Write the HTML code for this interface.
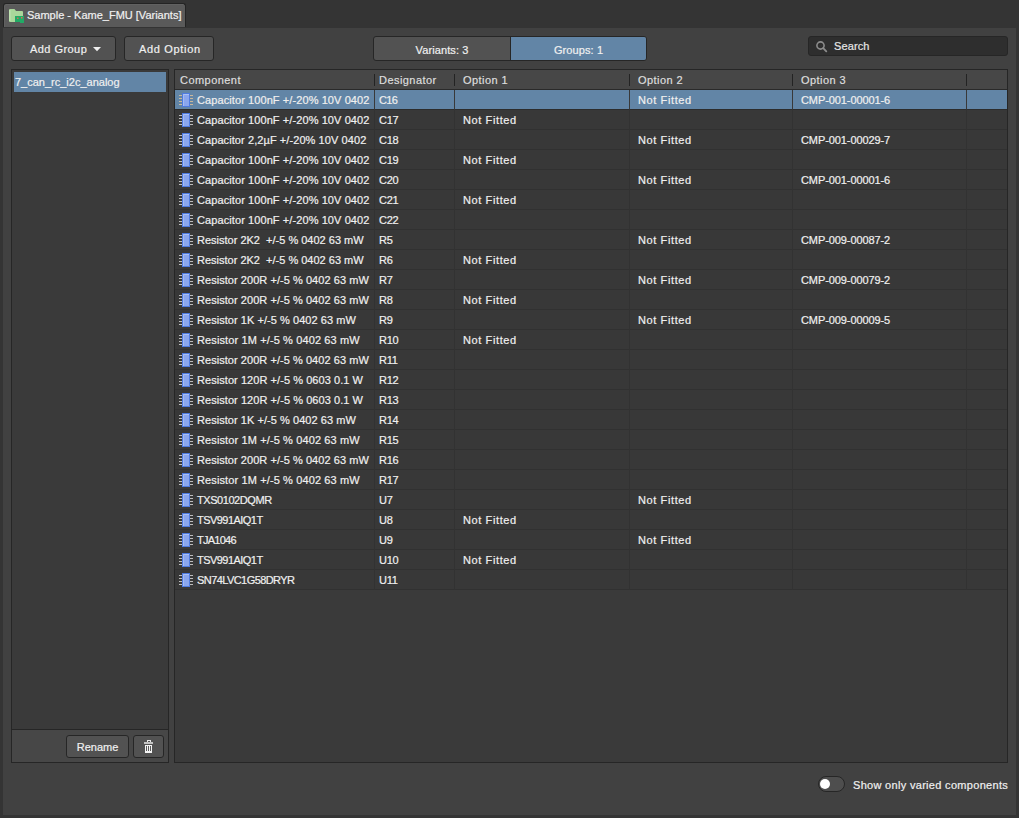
<!DOCTYPE html>
<html><head><meta charset="utf-8">
<style>
*{margin:0;padding:0;box-sizing:border-box}
html,body{width:1019px;height:818px;overflow:hidden;background:#343434;font-family:"Liberation Sans",sans-serif;font-size:11px;color:#eeeeee;-webkit-text-stroke:0.2px currentColor}
div,svg{position:absolute}
.panel{left:3px;top:28px;width:1013px;height:787px;background:#414141}
.tab{left:3px;top:3px;width:183px;height:24px;background:#5a5a5a;border-radius:3px 3px 0 0;border:1px solid #242424;border-bottom:none;box-shadow:inset 1px 1px 0 #616161}
.tabtxt{left:27px;top:6px;line-height:18px;color:#f0f0f0}
.btn{background:#525252;border:1px solid #262626;border-radius:3px;color:#f0f0f0;text-align:center}
.seg{left:373px;top:36px;width:274px;height:25px;border:1px solid #262626;border-radius:3px;background:#525252;overflow:hidden}
.search{left:808px;top:36px;width:200px;height:20px;background:#2e2e2e;border:1px solid #262626;border-radius:3px}
.list{left:11px;top:69px;width:158px;height:661px;background:#3a3a3a;border:1px solid #262626;border-bottom:none}
.foot{left:11px;top:729px;width:158px;height:34px;background:#474747;border:1px solid #262626}
.tbl{left:174px;top:69px;width:834px;height:694px;background:#3a3a3a;border:1px solid #262626}
.hdr{left:175px;top:70px;width:832px;height:19px;background:#474747}
.hline{left:175px;top:89px;width:832px;height:1px;background:#2a2a2a}
.row{left:175px;width:832px;height:20px;background:#383838;border-bottom:1px solid #313131}
.row.sel{background:#6285a6;border-bottom:1px solid #2c2c2c}
.t{line-height:19px;white-space:pre;color:#f0f0f0}
.h{line-height:19px;white-space:pre;color:#dedede;top:71px;letter-spacing:0.45px}
.vs{top:90px;width:1px;height:500px;background:#323232}
.hs{top:74px;width:1px;height:12px;background:#232323}
.ic{}
</style></head><body>
<div class="panel"></div>
<div class="tab"></div>
<svg style="left:9px;top:9px" width="16" height="15" viewBox="0 0 16 15">
 <path d="M0 1 Q0 0 1 0 H5.5 L7 2 H13 Q14 2 14 3 V12 Q14 13 13 13 H1 Q0 13 0 12 Z" fill="#a9d79b"/>
 <rect x="0" y="1" width="1.5" height="11" fill="#bfe3b2"/>
 <path d="M6 7 H15 V14 H11 V13 H6 Z" fill="#22aa66"/>
 <rect x="8" y="8.5" width="1.5" height="1.5" fill="#d9695a"/>
 <rect x="12" y="8" width="1.5" height="1.5" fill="#d9695a"/>
</svg>
<div class="tabtxt">Sample - Kame_FMU [Variants]</div>

<div class="btn" style="left:11px;top:36px;width:105px;height:25px"></div><div class="t" style="left:30px;top:38px;line-height:23px;letter-spacing:0.45px">Add Group</div>
<svg style="left:93px;top:47px" width="8" height="5" viewBox="0 0 8 5"><path d="M0 0 H8 L4 4.3 Z" fill="#f0f0f0"/></svg>
<div class="btn" style="left:124px;top:36px;width:90px;height:25px"></div><div class="t" style="left:139px;top:38px;line-height:23px;letter-spacing:0.67px">Add Option</div>

<div class="seg">
  <div style="left:0;top:2px;width:136px;height:23px;line-height:23px;text-align:center;color:#f0f0f0;letter-spacing:0.1px">Variants: 3</div>
  <div style="left:136px;top:0;width:1px;height:23px;background:#262626"></div>
  <div style="left:137px;top:0;width:135px;height:23px;background:#6285a6;color:#f0f0f0"><div style="left:0;top:2px;width:135px;line-height:23px;text-align:center;letter-spacing:0.1px">Groups: 1</div></div>
</div>

<div class="search"></div>
<svg style="left:814px;top:39px" width="14" height="14" viewBox="0 0 14 14"><circle cx="6.5" cy="6.5" r="3.6" fill="none" stroke="#8c8c8c" stroke-width="1.6"/><path d="M9.2 9.2 L12.3 12.3" stroke="#8c8c8c" stroke-width="1.8" stroke-linecap="round"/></svg>
<div class="t" style="left:834px;top:36px;line-height:20px;color:#e6e6e6;letter-spacing:0.12px">Search</div>

<div class="list"></div>
<div style="left:14px;top:72px;width:152px;height:20px;background:#6285a6"></div>
<div class="t" style="left:15px;top:72px;line-height:20px">7_can_rc_i2c_analog</div>
<div class="foot"></div>
<div class="btn" style="left:66px;top:735px;width:63px;height:23px;line-height:23px">Rename</div>
<div class="btn" style="left:133px;top:735px;width:31px;height:23px"></div>
<svg style="left:143px;top:739px" width="11" height="14" viewBox="0 0 11 14" shape-rendering="crispEdges">
 <rect x="4" y="1" width="4" height="1" fill="#e6e6e6"/><rect x="4" y="2" width="1" height="1" fill="#e6e6e6"/><rect x="7" y="2" width="1" height="1" fill="#e6e6e6"/>
 <rect x="1" y="3" width="9" height="2" fill="#c4c4c4"/>
 <rect x="2" y="6" width="7" height="8" rx="1" fill="#f4f4f4"/>
 <rect x="3" y="7" width="1" height="5" fill="#5a5a5a"/><rect x="5" y="7" width="1" height="5" fill="#5a5a5a"/><rect x="7" y="7" width="1" height="5" fill="#5a5a5a"/>
</svg>

<div class="tbl"></div>
<div class="hdr"></div>
<div class="hline"></div>
<div class="h" style="left:180px">Component</div>
<div class="h" style="left:379px">Designator</div>
<div class="h" style="left:463px">Option 1</div>
<div class="h" style="left:638px">Option 2</div>
<div class="h" style="left:801px">Option 3</div>
<div class="row sel" style="top:90px"></div><svg class="ic" style="left:179px;top:93px" width="15" height="14" viewBox="0 0 15 14"><rect x="0" y="2" width="3" height="1" fill="#c9b89c"/><rect x="11" y="2" width="3" height="1" fill="#c9b89c"/><rect x="0" y="5" width="3" height="1" fill="#c9b89c"/><rect x="11" y="5" width="3" height="1" fill="#c9b89c"/><rect x="0" y="8" width="3" height="1" fill="#c9b89c"/><rect x="11" y="8" width="3" height="1" fill="#c9b89c"/><rect x="0" y="11" width="3" height="1" fill="#c9b89c"/><rect x="11" y="11" width="3" height="1" fill="#c9b89c"/><rect x="3" y="0" width="8" height="14" fill="#4f7be0"/><rect x="4" y="1" width="6" height="12" fill="#8aa6ee"/><rect x="4" y="1" width="6" height="1" fill="#a9c0f5"/><rect x="4" y="1" width="1" height="12" fill="#a3bbf3"/></svg><div class="t" style="left:197px;top:91px;letter-spacing:0.09px;">Capacitor 100nF +/-20% 10V 0402</div><div class="t" style="left:379px;top:91px;letter-spacing:-0.6px;">C16</div><div class="t" style="left:638px;top:91px;letter-spacing:0.61px;">Not Fitted</div><div class="t" style="left:801px;top:91px;letter-spacing:-0.09px;">CMP-001-00001-6</div><div class="row" style="top:110px"></div><svg class="ic" style="left:179px;top:113px" width="15" height="14" viewBox="0 0 15 14"><rect x="0" y="2" width="3" height="1" fill="#bdbdbd"/><rect x="11" y="2" width="3" height="1" fill="#bdbdbd"/><rect x="0" y="5" width="3" height="1" fill="#bdbdbd"/><rect x="11" y="5" width="3" height="1" fill="#bdbdbd"/><rect x="0" y="8" width="3" height="1" fill="#bdbdbd"/><rect x="11" y="8" width="3" height="1" fill="#bdbdbd"/><rect x="0" y="11" width="3" height="1" fill="#bdbdbd"/><rect x="11" y="11" width="3" height="1" fill="#bdbdbd"/><rect x="3" y="0" width="8" height="14" fill="#4f7be0"/><rect x="4" y="1" width="6" height="12" fill="#8aa6ee"/><rect x="4" y="1" width="6" height="1" fill="#a9c0f5"/><rect x="4" y="1" width="1" height="12" fill="#a3bbf3"/></svg><div class="t" style="left:197px;top:111px;letter-spacing:0.09px;">Capacitor 100nF +/-20% 10V 0402</div><div class="t" style="left:379px;top:111px;letter-spacing:-0.3px;">C17</div><div class="t" style="left:463px;top:111px;letter-spacing:0.61px;">Not Fitted</div><div class="row" style="top:130px"></div><svg class="ic" style="left:179px;top:133px" width="15" height="14" viewBox="0 0 15 14"><rect x="0" y="2" width="3" height="1" fill="#bdbdbd"/><rect x="11" y="2" width="3" height="1" fill="#bdbdbd"/><rect x="0" y="5" width="3" height="1" fill="#bdbdbd"/><rect x="11" y="5" width="3" height="1" fill="#bdbdbd"/><rect x="0" y="8" width="3" height="1" fill="#bdbdbd"/><rect x="11" y="8" width="3" height="1" fill="#bdbdbd"/><rect x="0" y="11" width="3" height="1" fill="#bdbdbd"/><rect x="11" y="11" width="3" height="1" fill="#bdbdbd"/><rect x="3" y="0" width="8" height="14" fill="#4f7be0"/><rect x="4" y="1" width="6" height="12" fill="#8aa6ee"/><rect x="4" y="1" width="6" height="1" fill="#a9c0f5"/><rect x="4" y="1" width="1" height="12" fill="#a3bbf3"/></svg><div class="t" style="left:197px;top:131px;letter-spacing:0.08px;">Capacitor 2,2µF +/-20% 10V 0402</div><div class="t" style="left:379px;top:131px;letter-spacing:-0.3px;">C18</div><div class="t" style="left:638px;top:131px;letter-spacing:0.61px;">Not Fitted</div><div class="t" style="left:801px;top:131px;letter-spacing:-0.09px;">CMP-001-00029-7</div><div class="row" style="top:150px"></div><svg class="ic" style="left:179px;top:153px" width="15" height="14" viewBox="0 0 15 14"><rect x="0" y="2" width="3" height="1" fill="#bdbdbd"/><rect x="11" y="2" width="3" height="1" fill="#bdbdbd"/><rect x="0" y="5" width="3" height="1" fill="#bdbdbd"/><rect x="11" y="5" width="3" height="1" fill="#bdbdbd"/><rect x="0" y="8" width="3" height="1" fill="#bdbdbd"/><rect x="11" y="8" width="3" height="1" fill="#bdbdbd"/><rect x="0" y="11" width="3" height="1" fill="#bdbdbd"/><rect x="11" y="11" width="3" height="1" fill="#bdbdbd"/><rect x="3" y="0" width="8" height="14" fill="#4f7be0"/><rect x="4" y="1" width="6" height="12" fill="#8aa6ee"/><rect x="4" y="1" width="6" height="1" fill="#a9c0f5"/><rect x="4" y="1" width="1" height="12" fill="#a3bbf3"/></svg><div class="t" style="left:197px;top:151px;letter-spacing:0.09px;">Capacitor 100nF +/-20% 10V 0402</div><div class="t" style="left:379px;top:151px;letter-spacing:-0.3px;">C19</div><div class="t" style="left:463px;top:151px;letter-spacing:0.61px;">Not Fitted</div><div class="row" style="top:170px"></div><svg class="ic" style="left:179px;top:173px" width="15" height="14" viewBox="0 0 15 14"><rect x="0" y="2" width="3" height="1" fill="#bdbdbd"/><rect x="11" y="2" width="3" height="1" fill="#bdbdbd"/><rect x="0" y="5" width="3" height="1" fill="#bdbdbd"/><rect x="11" y="5" width="3" height="1" fill="#bdbdbd"/><rect x="0" y="8" width="3" height="1" fill="#bdbdbd"/><rect x="11" y="8" width="3" height="1" fill="#bdbdbd"/><rect x="0" y="11" width="3" height="1" fill="#bdbdbd"/><rect x="11" y="11" width="3" height="1" fill="#bdbdbd"/><rect x="3" y="0" width="8" height="14" fill="#4f7be0"/><rect x="4" y="1" width="6" height="12" fill="#8aa6ee"/><rect x="4" y="1" width="6" height="1" fill="#a9c0f5"/><rect x="4" y="1" width="1" height="12" fill="#a3bbf3"/></svg><div class="t" style="left:197px;top:171px;letter-spacing:0.09px;">Capacitor 100nF +/-20% 10V 0402</div><div class="t" style="left:379px;top:171px;letter-spacing:-0.3px;">C20</div><div class="t" style="left:638px;top:171px;letter-spacing:0.61px;">Not Fitted</div><div class="t" style="left:801px;top:171px;letter-spacing:-0.09px;">CMP-001-00001-6</div><div class="row" style="top:190px"></div><svg class="ic" style="left:179px;top:193px" width="15" height="14" viewBox="0 0 15 14"><rect x="0" y="2" width="3" height="1" fill="#bdbdbd"/><rect x="11" y="2" width="3" height="1" fill="#bdbdbd"/><rect x="0" y="5" width="3" height="1" fill="#bdbdbd"/><rect x="11" y="5" width="3" height="1" fill="#bdbdbd"/><rect x="0" y="8" width="3" height="1" fill="#bdbdbd"/><rect x="11" y="8" width="3" height="1" fill="#bdbdbd"/><rect x="0" y="11" width="3" height="1" fill="#bdbdbd"/><rect x="11" y="11" width="3" height="1" fill="#bdbdbd"/><rect x="3" y="0" width="8" height="14" fill="#4f7be0"/><rect x="4" y="1" width="6" height="12" fill="#8aa6ee"/><rect x="4" y="1" width="6" height="1" fill="#a9c0f5"/><rect x="4" y="1" width="1" height="12" fill="#a3bbf3"/></svg><div class="t" style="left:197px;top:191px;letter-spacing:0.09px;">Capacitor 100nF +/-20% 10V 0402</div><div class="t" style="left:379px;top:191px;letter-spacing:-0.3px;">C21</div><div class="t" style="left:463px;top:191px;letter-spacing:0.61px;">Not Fitted</div><div class="row" style="top:210px"></div><svg class="ic" style="left:179px;top:213px" width="15" height="14" viewBox="0 0 15 14"><rect x="0" y="2" width="3" height="1" fill="#bdbdbd"/><rect x="11" y="2" width="3" height="1" fill="#bdbdbd"/><rect x="0" y="5" width="3" height="1" fill="#bdbdbd"/><rect x="11" y="5" width="3" height="1" fill="#bdbdbd"/><rect x="0" y="8" width="3" height="1" fill="#bdbdbd"/><rect x="11" y="8" width="3" height="1" fill="#bdbdbd"/><rect x="0" y="11" width="3" height="1" fill="#bdbdbd"/><rect x="11" y="11" width="3" height="1" fill="#bdbdbd"/><rect x="3" y="0" width="8" height="14" fill="#4f7be0"/><rect x="4" y="1" width="6" height="12" fill="#8aa6ee"/><rect x="4" y="1" width="6" height="1" fill="#a9c0f5"/><rect x="4" y="1" width="1" height="12" fill="#a3bbf3"/></svg><div class="t" style="left:197px;top:211px;letter-spacing:0.09px;">Capacitor 100nF +/-20% 10V 0402</div><div class="t" style="left:379px;top:211px;letter-spacing:-0.3px;">C22</div><div class="row" style="top:230px"></div><svg class="ic" style="left:179px;top:233px" width="15" height="14" viewBox="0 0 15 14"><rect x="0" y="2" width="3" height="1" fill="#bdbdbd"/><rect x="11" y="2" width="3" height="1" fill="#bdbdbd"/><rect x="0" y="5" width="3" height="1" fill="#bdbdbd"/><rect x="11" y="5" width="3" height="1" fill="#bdbdbd"/><rect x="0" y="8" width="3" height="1" fill="#bdbdbd"/><rect x="11" y="8" width="3" height="1" fill="#bdbdbd"/><rect x="0" y="11" width="3" height="1" fill="#bdbdbd"/><rect x="11" y="11" width="3" height="1" fill="#bdbdbd"/><rect x="3" y="0" width="8" height="14" fill="#4f7be0"/><rect x="4" y="1" width="6" height="12" fill="#8aa6ee"/><rect x="4" y="1" width="6" height="1" fill="#a9c0f5"/><rect x="4" y="1" width="1" height="12" fill="#a3bbf3"/></svg><div class="t" style="left:197px;top:231px;letter-spacing:0.0px;">Resistor 2K2 &nbsp;+/-5 % 0402 63 mW</div><div class="t" style="left:379px;top:231px;letter-spacing:-0.3px;">R5</div><div class="t" style="left:638px;top:231px;letter-spacing:0.61px;">Not Fitted</div><div class="t" style="left:801px;top:231px;letter-spacing:-0.09px;">CMP-009-00087-2</div><div class="row" style="top:250px"></div><svg class="ic" style="left:179px;top:253px" width="15" height="14" viewBox="0 0 15 14"><rect x="0" y="2" width="3" height="1" fill="#bdbdbd"/><rect x="11" y="2" width="3" height="1" fill="#bdbdbd"/><rect x="0" y="5" width="3" height="1" fill="#bdbdbd"/><rect x="11" y="5" width="3" height="1" fill="#bdbdbd"/><rect x="0" y="8" width="3" height="1" fill="#bdbdbd"/><rect x="11" y="8" width="3" height="1" fill="#bdbdbd"/><rect x="0" y="11" width="3" height="1" fill="#bdbdbd"/><rect x="11" y="11" width="3" height="1" fill="#bdbdbd"/><rect x="3" y="0" width="8" height="14" fill="#4f7be0"/><rect x="4" y="1" width="6" height="12" fill="#8aa6ee"/><rect x="4" y="1" width="6" height="1" fill="#a9c0f5"/><rect x="4" y="1" width="1" height="12" fill="#a3bbf3"/></svg><div class="t" style="left:197px;top:251px;letter-spacing:0.0px;">Resistor 2K2 &nbsp;+/-5 % 0402 63 mW</div><div class="t" style="left:379px;top:251px;letter-spacing:-0.3px;">R6</div><div class="t" style="left:463px;top:251px;letter-spacing:0.61px;">Not Fitted</div><div class="row" style="top:270px"></div><svg class="ic" style="left:179px;top:273px" width="15" height="14" viewBox="0 0 15 14"><rect x="0" y="2" width="3" height="1" fill="#bdbdbd"/><rect x="11" y="2" width="3" height="1" fill="#bdbdbd"/><rect x="0" y="5" width="3" height="1" fill="#bdbdbd"/><rect x="11" y="5" width="3" height="1" fill="#bdbdbd"/><rect x="0" y="8" width="3" height="1" fill="#bdbdbd"/><rect x="11" y="8" width="3" height="1" fill="#bdbdbd"/><rect x="0" y="11" width="3" height="1" fill="#bdbdbd"/><rect x="11" y="11" width="3" height="1" fill="#bdbdbd"/><rect x="3" y="0" width="8" height="14" fill="#4f7be0"/><rect x="4" y="1" width="6" height="12" fill="#8aa6ee"/><rect x="4" y="1" width="6" height="1" fill="#a9c0f5"/><rect x="4" y="1" width="1" height="12" fill="#a3bbf3"/></svg><div class="t" style="left:197px;top:271px;letter-spacing:0.05px;">Resistor 200R +/-5 % 0402 63 mW</div><div class="t" style="left:379px;top:271px;letter-spacing:-0.3px;">R7</div><div class="t" style="left:638px;top:271px;letter-spacing:0.61px;">Not Fitted</div><div class="t" style="left:801px;top:271px;letter-spacing:-0.09px;">CMP-009-00079-2</div><div class="row" style="top:290px"></div><svg class="ic" style="left:179px;top:293px" width="15" height="14" viewBox="0 0 15 14"><rect x="0" y="2" width="3" height="1" fill="#bdbdbd"/><rect x="11" y="2" width="3" height="1" fill="#bdbdbd"/><rect x="0" y="5" width="3" height="1" fill="#bdbdbd"/><rect x="11" y="5" width="3" height="1" fill="#bdbdbd"/><rect x="0" y="8" width="3" height="1" fill="#bdbdbd"/><rect x="11" y="8" width="3" height="1" fill="#bdbdbd"/><rect x="0" y="11" width="3" height="1" fill="#bdbdbd"/><rect x="11" y="11" width="3" height="1" fill="#bdbdbd"/><rect x="3" y="0" width="8" height="14" fill="#4f7be0"/><rect x="4" y="1" width="6" height="12" fill="#8aa6ee"/><rect x="4" y="1" width="6" height="1" fill="#a9c0f5"/><rect x="4" y="1" width="1" height="12" fill="#a3bbf3"/></svg><div class="t" style="left:197px;top:291px;letter-spacing:0.05px;">Resistor 200R +/-5 % 0402 63 mW</div><div class="t" style="left:379px;top:291px;letter-spacing:-0.3px;">R8</div><div class="t" style="left:463px;top:291px;letter-spacing:0.61px;">Not Fitted</div><div class="row" style="top:310px"></div><svg class="ic" style="left:179px;top:313px" width="15" height="14" viewBox="0 0 15 14"><rect x="0" y="2" width="3" height="1" fill="#bdbdbd"/><rect x="11" y="2" width="3" height="1" fill="#bdbdbd"/><rect x="0" y="5" width="3" height="1" fill="#bdbdbd"/><rect x="11" y="5" width="3" height="1" fill="#bdbdbd"/><rect x="0" y="8" width="3" height="1" fill="#bdbdbd"/><rect x="11" y="8" width="3" height="1" fill="#bdbdbd"/><rect x="0" y="11" width="3" height="1" fill="#bdbdbd"/><rect x="11" y="11" width="3" height="1" fill="#bdbdbd"/><rect x="3" y="0" width="8" height="14" fill="#4f7be0"/><rect x="4" y="1" width="6" height="12" fill="#8aa6ee"/><rect x="4" y="1" width="6" height="1" fill="#a9c0f5"/><rect x="4" y="1" width="1" height="12" fill="#a3bbf3"/></svg><div class="t" style="left:197px;top:311px;letter-spacing:0.05px;">Resistor 1K +/-5 % 0402 63 mW</div><div class="t" style="left:379px;top:311px;letter-spacing:-0.3px;">R9</div><div class="t" style="left:638px;top:311px;letter-spacing:0.61px;">Not Fitted</div><div class="t" style="left:801px;top:311px;letter-spacing:-0.09px;">CMP-009-00009-5</div><div class="row" style="top:330px"></div><svg class="ic" style="left:179px;top:333px" width="15" height="14" viewBox="0 0 15 14"><rect x="0" y="2" width="3" height="1" fill="#bdbdbd"/><rect x="11" y="2" width="3" height="1" fill="#bdbdbd"/><rect x="0" y="5" width="3" height="1" fill="#bdbdbd"/><rect x="11" y="5" width="3" height="1" fill="#bdbdbd"/><rect x="0" y="8" width="3" height="1" fill="#bdbdbd"/><rect x="11" y="8" width="3" height="1" fill="#bdbdbd"/><rect x="0" y="11" width="3" height="1" fill="#bdbdbd"/><rect x="11" y="11" width="3" height="1" fill="#bdbdbd"/><rect x="3" y="0" width="8" height="14" fill="#4f7be0"/><rect x="4" y="1" width="6" height="12" fill="#8aa6ee"/><rect x="4" y="1" width="6" height="1" fill="#a9c0f5"/><rect x="4" y="1" width="1" height="12" fill="#a3bbf3"/></svg><div class="t" style="left:197px;top:331px;letter-spacing:0.12px;">Resistor 1M +/-5 % 0402 63 mW</div><div class="t" style="left:379px;top:331px;letter-spacing:-0.3px;">R10</div><div class="t" style="left:463px;top:331px;letter-spacing:0.61px;">Not Fitted</div><div class="row" style="top:350px"></div><svg class="ic" style="left:179px;top:353px" width="15" height="14" viewBox="0 0 15 14"><rect x="0" y="2" width="3" height="1" fill="#bdbdbd"/><rect x="11" y="2" width="3" height="1" fill="#bdbdbd"/><rect x="0" y="5" width="3" height="1" fill="#bdbdbd"/><rect x="11" y="5" width="3" height="1" fill="#bdbdbd"/><rect x="0" y="8" width="3" height="1" fill="#bdbdbd"/><rect x="11" y="8" width="3" height="1" fill="#bdbdbd"/><rect x="0" y="11" width="3" height="1" fill="#bdbdbd"/><rect x="11" y="11" width="3" height="1" fill="#bdbdbd"/><rect x="3" y="0" width="8" height="14" fill="#4f7be0"/><rect x="4" y="1" width="6" height="12" fill="#8aa6ee"/><rect x="4" y="1" width="6" height="1" fill="#a9c0f5"/><rect x="4" y="1" width="1" height="12" fill="#a3bbf3"/></svg><div class="t" style="left:197px;top:351px;letter-spacing:0.05px;">Resistor 200R +/-5 % 0402 63 mW</div><div class="t" style="left:379px;top:351px;letter-spacing:-0.3px;">R11</div><div class="row" style="top:370px"></div><svg class="ic" style="left:179px;top:373px" width="15" height="14" viewBox="0 0 15 14"><rect x="0" y="2" width="3" height="1" fill="#bdbdbd"/><rect x="11" y="2" width="3" height="1" fill="#bdbdbd"/><rect x="0" y="5" width="3" height="1" fill="#bdbdbd"/><rect x="11" y="5" width="3" height="1" fill="#bdbdbd"/><rect x="0" y="8" width="3" height="1" fill="#bdbdbd"/><rect x="11" y="8" width="3" height="1" fill="#bdbdbd"/><rect x="0" y="11" width="3" height="1" fill="#bdbdbd"/><rect x="11" y="11" width="3" height="1" fill="#bdbdbd"/><rect x="3" y="0" width="8" height="14" fill="#4f7be0"/><rect x="4" y="1" width="6" height="12" fill="#8aa6ee"/><rect x="4" y="1" width="6" height="1" fill="#a9c0f5"/><rect x="4" y="1" width="1" height="12" fill="#a3bbf3"/></svg><div class="t" style="left:197px;top:371px;letter-spacing:0.06px;">Resistor 120R +/-5 % 0603 0.1 W</div><div class="t" style="left:379px;top:371px;letter-spacing:-0.3px;">R12</div><div class="row" style="top:390px"></div><svg class="ic" style="left:179px;top:393px" width="15" height="14" viewBox="0 0 15 14"><rect x="0" y="2" width="3" height="1" fill="#bdbdbd"/><rect x="11" y="2" width="3" height="1" fill="#bdbdbd"/><rect x="0" y="5" width="3" height="1" fill="#bdbdbd"/><rect x="11" y="5" width="3" height="1" fill="#bdbdbd"/><rect x="0" y="8" width="3" height="1" fill="#bdbdbd"/><rect x="11" y="8" width="3" height="1" fill="#bdbdbd"/><rect x="0" y="11" width="3" height="1" fill="#bdbdbd"/><rect x="11" y="11" width="3" height="1" fill="#bdbdbd"/><rect x="3" y="0" width="8" height="14" fill="#4f7be0"/><rect x="4" y="1" width="6" height="12" fill="#8aa6ee"/><rect x="4" y="1" width="6" height="1" fill="#a9c0f5"/><rect x="4" y="1" width="1" height="12" fill="#a3bbf3"/></svg><div class="t" style="left:197px;top:391px;letter-spacing:0.06px;">Resistor 120R +/-5 % 0603 0.1 W</div><div class="t" style="left:379px;top:391px;letter-spacing:-0.3px;">R13</div><div class="row" style="top:410px"></div><svg class="ic" style="left:179px;top:413px" width="15" height="14" viewBox="0 0 15 14"><rect x="0" y="2" width="3" height="1" fill="#bdbdbd"/><rect x="11" y="2" width="3" height="1" fill="#bdbdbd"/><rect x="0" y="5" width="3" height="1" fill="#bdbdbd"/><rect x="11" y="5" width="3" height="1" fill="#bdbdbd"/><rect x="0" y="8" width="3" height="1" fill="#bdbdbd"/><rect x="11" y="8" width="3" height="1" fill="#bdbdbd"/><rect x="0" y="11" width="3" height="1" fill="#bdbdbd"/><rect x="11" y="11" width="3" height="1" fill="#bdbdbd"/><rect x="3" y="0" width="8" height="14" fill="#4f7be0"/><rect x="4" y="1" width="6" height="12" fill="#8aa6ee"/><rect x="4" y="1" width="6" height="1" fill="#a9c0f5"/><rect x="4" y="1" width="1" height="12" fill="#a3bbf3"/></svg><div class="t" style="left:197px;top:411px;letter-spacing:0.05px;">Resistor 1K +/-5 % 0402 63 mW</div><div class="t" style="left:379px;top:411px;letter-spacing:-0.3px;">R14</div><div class="row" style="top:430px"></div><svg class="ic" style="left:179px;top:433px" width="15" height="14" viewBox="0 0 15 14"><rect x="0" y="2" width="3" height="1" fill="#bdbdbd"/><rect x="11" y="2" width="3" height="1" fill="#bdbdbd"/><rect x="0" y="5" width="3" height="1" fill="#bdbdbd"/><rect x="11" y="5" width="3" height="1" fill="#bdbdbd"/><rect x="0" y="8" width="3" height="1" fill="#bdbdbd"/><rect x="11" y="8" width="3" height="1" fill="#bdbdbd"/><rect x="0" y="11" width="3" height="1" fill="#bdbdbd"/><rect x="11" y="11" width="3" height="1" fill="#bdbdbd"/><rect x="3" y="0" width="8" height="14" fill="#4f7be0"/><rect x="4" y="1" width="6" height="12" fill="#8aa6ee"/><rect x="4" y="1" width="6" height="1" fill="#a9c0f5"/><rect x="4" y="1" width="1" height="12" fill="#a3bbf3"/></svg><div class="t" style="left:197px;top:431px;letter-spacing:0.12px;">Resistor 1M +/-5 % 0402 63 mW</div><div class="t" style="left:379px;top:431px;letter-spacing:-0.3px;">R15</div><div class="row" style="top:450px"></div><svg class="ic" style="left:179px;top:453px" width="15" height="14" viewBox="0 0 15 14"><rect x="0" y="2" width="3" height="1" fill="#bdbdbd"/><rect x="11" y="2" width="3" height="1" fill="#bdbdbd"/><rect x="0" y="5" width="3" height="1" fill="#bdbdbd"/><rect x="11" y="5" width="3" height="1" fill="#bdbdbd"/><rect x="0" y="8" width="3" height="1" fill="#bdbdbd"/><rect x="11" y="8" width="3" height="1" fill="#bdbdbd"/><rect x="0" y="11" width="3" height="1" fill="#bdbdbd"/><rect x="11" y="11" width="3" height="1" fill="#bdbdbd"/><rect x="3" y="0" width="8" height="14" fill="#4f7be0"/><rect x="4" y="1" width="6" height="12" fill="#8aa6ee"/><rect x="4" y="1" width="6" height="1" fill="#a9c0f5"/><rect x="4" y="1" width="1" height="12" fill="#a3bbf3"/></svg><div class="t" style="left:197px;top:451px;letter-spacing:0.05px;">Resistor 200R +/-5 % 0402 63 mW</div><div class="t" style="left:379px;top:451px;letter-spacing:-0.3px;">R16</div><div class="row" style="top:470px"></div><svg class="ic" style="left:179px;top:473px" width="15" height="14" viewBox="0 0 15 14"><rect x="0" y="2" width="3" height="1" fill="#bdbdbd"/><rect x="11" y="2" width="3" height="1" fill="#bdbdbd"/><rect x="0" y="5" width="3" height="1" fill="#bdbdbd"/><rect x="11" y="5" width="3" height="1" fill="#bdbdbd"/><rect x="0" y="8" width="3" height="1" fill="#bdbdbd"/><rect x="11" y="8" width="3" height="1" fill="#bdbdbd"/><rect x="0" y="11" width="3" height="1" fill="#bdbdbd"/><rect x="11" y="11" width="3" height="1" fill="#bdbdbd"/><rect x="3" y="0" width="8" height="14" fill="#4f7be0"/><rect x="4" y="1" width="6" height="12" fill="#8aa6ee"/><rect x="4" y="1" width="6" height="1" fill="#a9c0f5"/><rect x="4" y="1" width="1" height="12" fill="#a3bbf3"/></svg><div class="t" style="left:197px;top:471px;letter-spacing:0.12px;">Resistor 1M +/-5 % 0402 63 mW</div><div class="t" style="left:379px;top:471px;letter-spacing:-0.3px;">R17</div><div class="row" style="top:490px"></div><svg class="ic" style="left:179px;top:493px" width="15" height="14" viewBox="0 0 15 14"><rect x="0" y="2" width="3" height="1" fill="#bdbdbd"/><rect x="11" y="2" width="3" height="1" fill="#bdbdbd"/><rect x="0" y="5" width="3" height="1" fill="#bdbdbd"/><rect x="11" y="5" width="3" height="1" fill="#bdbdbd"/><rect x="0" y="8" width="3" height="1" fill="#bdbdbd"/><rect x="11" y="8" width="3" height="1" fill="#bdbdbd"/><rect x="0" y="11" width="3" height="1" fill="#bdbdbd"/><rect x="11" y="11" width="3" height="1" fill="#bdbdbd"/><rect x="3" y="0" width="8" height="14" fill="#4f7be0"/><rect x="4" y="1" width="6" height="12" fill="#8aa6ee"/><rect x="4" y="1" width="6" height="1" fill="#a9c0f5"/><rect x="4" y="1" width="1" height="12" fill="#a3bbf3"/></svg><div class="t" style="left:197px;top:491px;letter-spacing:-0.44px;">TXS0102DQMR</div><div class="t" style="left:379px;top:491px;letter-spacing:-0.3px;">U7</div><div class="t" style="left:638px;top:491px;letter-spacing:0.61px;">Not Fitted</div><div class="row" style="top:510px"></div><svg class="ic" style="left:179px;top:513px" width="15" height="14" viewBox="0 0 15 14"><rect x="0" y="2" width="3" height="1" fill="#bdbdbd"/><rect x="11" y="2" width="3" height="1" fill="#bdbdbd"/><rect x="0" y="5" width="3" height="1" fill="#bdbdbd"/><rect x="11" y="5" width="3" height="1" fill="#bdbdbd"/><rect x="0" y="8" width="3" height="1" fill="#bdbdbd"/><rect x="11" y="8" width="3" height="1" fill="#bdbdbd"/><rect x="0" y="11" width="3" height="1" fill="#bdbdbd"/><rect x="11" y="11" width="3" height="1" fill="#bdbdbd"/><rect x="3" y="0" width="8" height="14" fill="#4f7be0"/><rect x="4" y="1" width="6" height="12" fill="#8aa6ee"/><rect x="4" y="1" width="6" height="1" fill="#a9c0f5"/><rect x="4" y="1" width="1" height="12" fill="#a3bbf3"/></svg><div class="t" style="left:197px;top:511px;letter-spacing:-0.54px;">TSV991AIQ1T</div><div class="t" style="left:379px;top:511px;letter-spacing:-0.3px;">U8</div><div class="t" style="left:463px;top:511px;letter-spacing:0.61px;">Not Fitted</div><div class="row" style="top:530px"></div><svg class="ic" style="left:179px;top:533px" width="15" height="14" viewBox="0 0 15 14"><rect x="0" y="2" width="3" height="1" fill="#bdbdbd"/><rect x="11" y="2" width="3" height="1" fill="#bdbdbd"/><rect x="0" y="5" width="3" height="1" fill="#bdbdbd"/><rect x="11" y="5" width="3" height="1" fill="#bdbdbd"/><rect x="0" y="8" width="3" height="1" fill="#bdbdbd"/><rect x="11" y="8" width="3" height="1" fill="#bdbdbd"/><rect x="0" y="11" width="3" height="1" fill="#bdbdbd"/><rect x="11" y="11" width="3" height="1" fill="#bdbdbd"/><rect x="3" y="0" width="8" height="14" fill="#4f7be0"/><rect x="4" y="1" width="6" height="12" fill="#8aa6ee"/><rect x="4" y="1" width="6" height="1" fill="#a9c0f5"/><rect x="4" y="1" width="1" height="12" fill="#a3bbf3"/></svg><div class="t" style="left:197px;top:531px;letter-spacing:-0.75px;">TJA1046</div><div class="t" style="left:379px;top:531px;letter-spacing:-0.3px;">U9</div><div class="t" style="left:638px;top:531px;letter-spacing:0.61px;">Not Fitted</div><div class="row" style="top:550px"></div><svg class="ic" style="left:179px;top:553px" width="15" height="14" viewBox="0 0 15 14"><rect x="0" y="2" width="3" height="1" fill="#bdbdbd"/><rect x="11" y="2" width="3" height="1" fill="#bdbdbd"/><rect x="0" y="5" width="3" height="1" fill="#bdbdbd"/><rect x="11" y="5" width="3" height="1" fill="#bdbdbd"/><rect x="0" y="8" width="3" height="1" fill="#bdbdbd"/><rect x="11" y="8" width="3" height="1" fill="#bdbdbd"/><rect x="0" y="11" width="3" height="1" fill="#bdbdbd"/><rect x="11" y="11" width="3" height="1" fill="#bdbdbd"/><rect x="3" y="0" width="8" height="14" fill="#4f7be0"/><rect x="4" y="1" width="6" height="12" fill="#8aa6ee"/><rect x="4" y="1" width="6" height="1" fill="#a9c0f5"/><rect x="4" y="1" width="1" height="12" fill="#a3bbf3"/></svg><div class="t" style="left:197px;top:551px;letter-spacing:-0.54px;">TSV991AIQ1T</div><div class="t" style="left:379px;top:551px;letter-spacing:-0.3px;">U10</div><div class="t" style="left:463px;top:551px;letter-spacing:0.61px;">Not Fitted</div><div class="row" style="top:570px"></div><svg class="ic" style="left:179px;top:573px" width="15" height="14" viewBox="0 0 15 14"><rect x="0" y="2" width="3" height="1" fill="#bdbdbd"/><rect x="11" y="2" width="3" height="1" fill="#bdbdbd"/><rect x="0" y="5" width="3" height="1" fill="#bdbdbd"/><rect x="11" y="5" width="3" height="1" fill="#bdbdbd"/><rect x="0" y="8" width="3" height="1" fill="#bdbdbd"/><rect x="11" y="8" width="3" height="1" fill="#bdbdbd"/><rect x="0" y="11" width="3" height="1" fill="#bdbdbd"/><rect x="11" y="11" width="3" height="1" fill="#bdbdbd"/><rect x="3" y="0" width="8" height="14" fill="#4f7be0"/><rect x="4" y="1" width="6" height="12" fill="#8aa6ee"/><rect x="4" y="1" width="6" height="1" fill="#a9c0f5"/><rect x="4" y="1" width="1" height="12" fill="#a3bbf3"/></svg><div class="t" style="left:197px;top:571px;letter-spacing:-0.57px;">SN74LVC1G58DRYR</div><div class="t" style="left:379px;top:571px;letter-spacing:-0.3px;">U11</div>
<div class="vs" style="left:374px"></div><div class="hs" style="left:374px"></div><div style="left:374px;top:90px;width:1px;height:19px;background:#393939"></div><div class="vs" style="left:454px"></div><div class="hs" style="left:454px"></div><div style="left:454px;top:90px;width:1px;height:19px;background:#393939"></div><div class="vs" style="left:629px"></div><div class="hs" style="left:629px"></div><div style="left:629px;top:90px;width:1px;height:19px;background:#393939"></div><div class="vs" style="left:792px"></div><div class="hs" style="left:792px"></div><div style="left:792px;top:90px;width:1px;height:19px;background:#393939"></div><div class="vs" style="left:966px"></div><div class="hs" style="left:966px"></div><div style="left:966px;top:90px;width:1px;height:19px;background:#393939"></div>

<div style="left:818px;top:776px;width:27px;height:16px;border-radius:8px;background:#4e4e4e;border:1.5px solid #262626"></div>
<div style="left:820px;top:779px;width:10px;height:10px;border-radius:5px;background:#ffffff"></div>
<div class="t" style="left:853px;top:775px;line-height:20px;letter-spacing:0.31px">Show only varied components</div>
</body></html>
